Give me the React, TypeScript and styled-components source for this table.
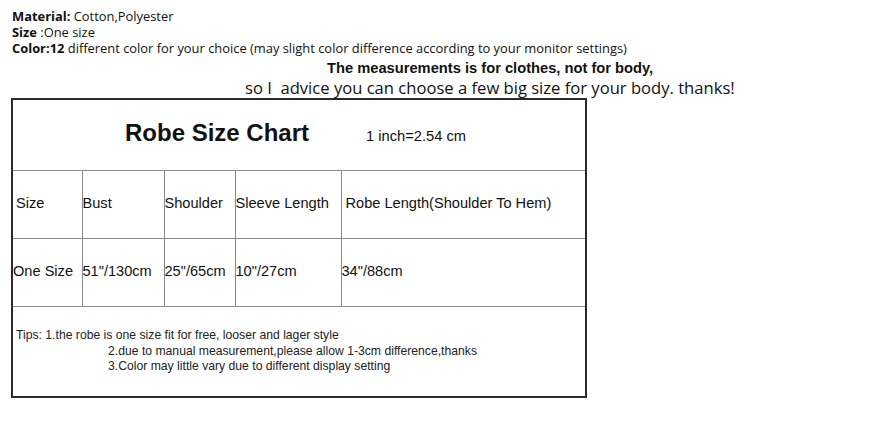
import styled, { createGlobalStyle } from "styled-components"

const GlobalStyle = createGlobalStyle`
  body {
    margin: 0;
    background: #fff;
    color: #111;
  }
`

const columns = [
  { head: "Size", value: "One Size", width: 70, headPad: 3, valuePad: 0 },
  { head: "Bust", value: "51\"/130cm", width: 82, headPad: 0, valuePad: 0 },
  { head: "Shoulder", value: "25\"/65cm", width: 71, headPad: 0, valuePad: 0 },
  { head: "Sleeve Length", value: "10\"/27cm", width: 106, headPad: 0, valuePad: 0 },
  { head: "Robe Length(Shoulder To Hem)", value: "34\"/88cm", width: 245, headPad: 4, valuePad: 0 },
]

const tips = [
  "1.the robe is one size fit for free, looser and lager style",
  "2.due to manual measurement,please allow 1-3cm difference,thanks",
  "3.Color may little vary due to different display setting",
]

const App = () => {
  return (
    <Page>
      <GlobalStyle />
      <Specs>
        <SpecLine>
          <b>Material:</b> Cotton,Polyester
        </SpecLine>
        <SpecLine>
          <b>Size </b>:One size
        </SpecLine>
        <SpecLine>
          <b>Color:12</b> different color for your choice (may slight color difference according to your monitor settings)
        </SpecLine>
      </Specs>
      <Notice>The measurements is for clothes, not for body,</Notice>
      <Advice>so I&nbsp; advice you can choose a few big size for your body. thanks!</Advice>

      <Chart>
        <colgroup>
          {columns.map((c) => (
            <col key={c.head} style={{ width: c.width }} />
          ))}
        </colgroup>
        <tbody>
          <TitleRow>
            <td colSpan={5}>
              <TitleWrap>
                <Title>Robe Size Chart</Title>
                <Unit>1 inch=2.54 cm</Unit>
              </TitleWrap>
            </td>
          </TitleRow>
          <DataRow>
            {columns.map((c) => (
              <Cell key={c.head} $pad={c.headPad}>
                {c.head}
              </Cell>
            ))}
          </DataRow>
          <DataRow>
            {columns.map((c) => (
              <Cell key={c.head} $pad={c.valuePad}>
                {c.value}
              </Cell>
            ))}
          </DataRow>
          <TipsRow>
            <td colSpan={5}>
              <Tips>
                <TipLead>Tips: {tips[0]}</TipLead>
                {tips.slice(1).map((t) => (
                  <TipLine key={t}>{t}</TipLine>
                ))}
              </Tips>
            </td>
          </TipsRow>
        </tbody>
      </Chart>
    </Page>
  )
}

export default App

const Page = styled.div`
  width: 886px;
  height: 422px;
  padding: 8px 0 0 12px;
  box-sizing: border-box;
  overflow: hidden;
`

const Specs = styled.div`
  font-family: "Open Sans", "Noto Sans", sans-serif;
  font-size: 12.9px;
  line-height: 16px;
  color: #111;

  b {
    font-weight: 700;
  }
`

const SpecLine = styled.div`
  white-space: nowrap;
`

const Notice = styled.div`
  font-family: "Liberation Sans", Arial, sans-serif;
  font-weight: bold;
  font-size: 14.7px;
  line-height: 20px;
  margin-top: 2px;
  margin-left: 315px;
  white-space: nowrap;
  color: #111;
`

const Advice = styled.div`
  font-family: "Open Sans", "Noto Sans", sans-serif;
  font-size: 16.6px;
  line-height: 20px;
  margin-left: 233px;
  white-space: nowrap;
  color: #111;
`

const Chart = styled.table`
  margin: 0 0 0 -1px;
  width: 574px;
  border-collapse: collapse;
  table-layout: fixed;
  border: 2px solid #2a2a2a;
  font-family: "Liberation Sans", Arial, sans-serif;
  color: #111;

  td {
    border: 1px solid #8a8a8a;
    padding: 0;
  }
`

const TitleRow = styled.tr`
  height: 71px;
`

const TitleWrap = styled.div`
  display: flex;
  align-items: baseline;
  padding-left: 112px;
  gap: 57px;
  margin-top: -4px;
`

const Title = styled.span`
  font-size: 24px;
  font-weight: bold;
`

const Unit = styled.span`
  font-size: 14.7px;
`

const DataRow = styled.tr`
  height: 68px;
`

const Cell = styled.td<{ $pad: number }>`
  font-size: 14.6px;
  white-space: nowrap;
  vertical-align: middle;
  && {
    padding-left: ${(p) => p.$pad}px;
    padding-bottom: 2px;
  }
`

const TipsRow = styled.tr`
  height: 91px;
`

const Tips = styled.div`
  font-size: 12.2px;
  line-height: 15.5px;
  color: #222;
  padding: 0 0 0 3px;
`

const TipLead = styled.div`
  white-space: nowrap;
`

const TipLine = styled.div`
  padding-left: 92px;
  white-space: nowrap;
`
